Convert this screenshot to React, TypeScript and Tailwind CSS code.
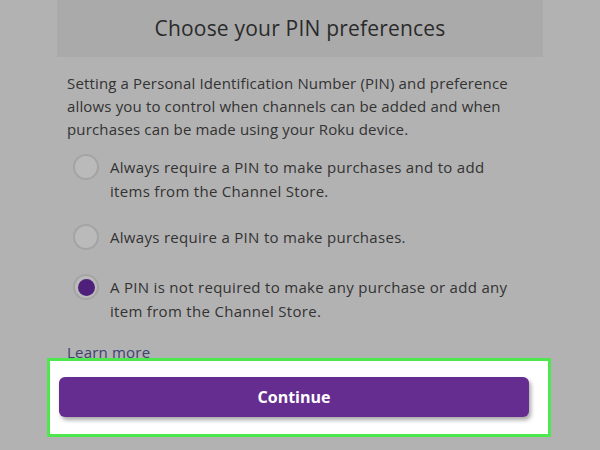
type Option = { id: string; label: string; selected?: boolean; gap: string };

const OPTIONS: Option[] = [
  {
    id: "always-all",
    label: "Always require a PIN to make purchases and to add items from the Channel Store.",
    gap: "mt-0",
  },
  {
    id: "always-purchases",
    label: "Always require a PIN to make purchases.",
    gap: "mt-[22px]",
  },
  {
    id: "never",
    label: "A PIN is not required to make any purchase or add any item from the Channel Store.",
    selected: true,
    gap: "mt-[25px]",
  },
];

function Radio({ selected }: { selected?: boolean }) {
  return (
    <span className="flex h-[26px] w-[26px] shrink-0 items-center justify-center rounded-full border-2 border-[#a4a4a4] bg-[#bababa] -mt-[1px]">
      {selected ? <span className="h-[17px] w-[17px] rounded-full bg-[#4f1f7c]" /> : null}
    </span>
  );
}

export default function App() {
  return (
    <div
      className="flex h-[450px] w-[600px] flex-col overflow-hidden bg-[#b2b2b2] text-[#333333]"
      style={{ fontFamily: '"Open Sans", "Liberation Sans", sans-serif' }}
    >
      <div className="ml-[57px] flex h-[57px] w-[486px] shrink-0 items-center justify-center bg-[#aaaaaa]">
        <h1 className="text-[21px] tracking-[0.2px] text-[#2a2a2a]">Choose your PIN preferences</h1>
      </div>

      <p className="ml-[67px] mt-[15px] w-[470px] text-[15px] leading-[23px] tracking-[0.15px]">
        Setting a Personal Identification Number (PIN) and preference allows you to control when
        channels can be added and when purchases can be made using your Roku device.
      </p>

      <div className="ml-[73px] mt-[14px] flex flex-col" role="radiogroup">
        {OPTIONS.map((o) => (
          <div key={o.id} className={`flex items-start gap-[11px] ${o.gap}`} role="radio" aria-checked={!!o.selected}>
            <Radio selected={o.selected} />
            <span className="w-[410px] text-[15px] leading-[24px] tracking-[0.3px]">{o.label}</span>
          </div>
        ))}
      </div>

      <a className="ml-[67px] mt-[20px] text-[15px] leading-[18px] tracking-[0.2px] text-[#3c4170]">Learn more</a>

      <div className="-mt-[3px] ml-[47px] h-[79px] w-[504px] shrink-0 border-[3px] border-[#4de84d] bg-white pl-[9px] pt-[16px]">
        <button
          type="button"
          className="flex h-[40px] w-[470px] items-center justify-center rounded-[6px] bg-[#662d91] text-[16px] font-bold text-white shadow-[2px_3px_4px_rgba(0,0,0,0.35)]"
        >
          Continue
        </button>
      </div>
    </div>
  );
}
